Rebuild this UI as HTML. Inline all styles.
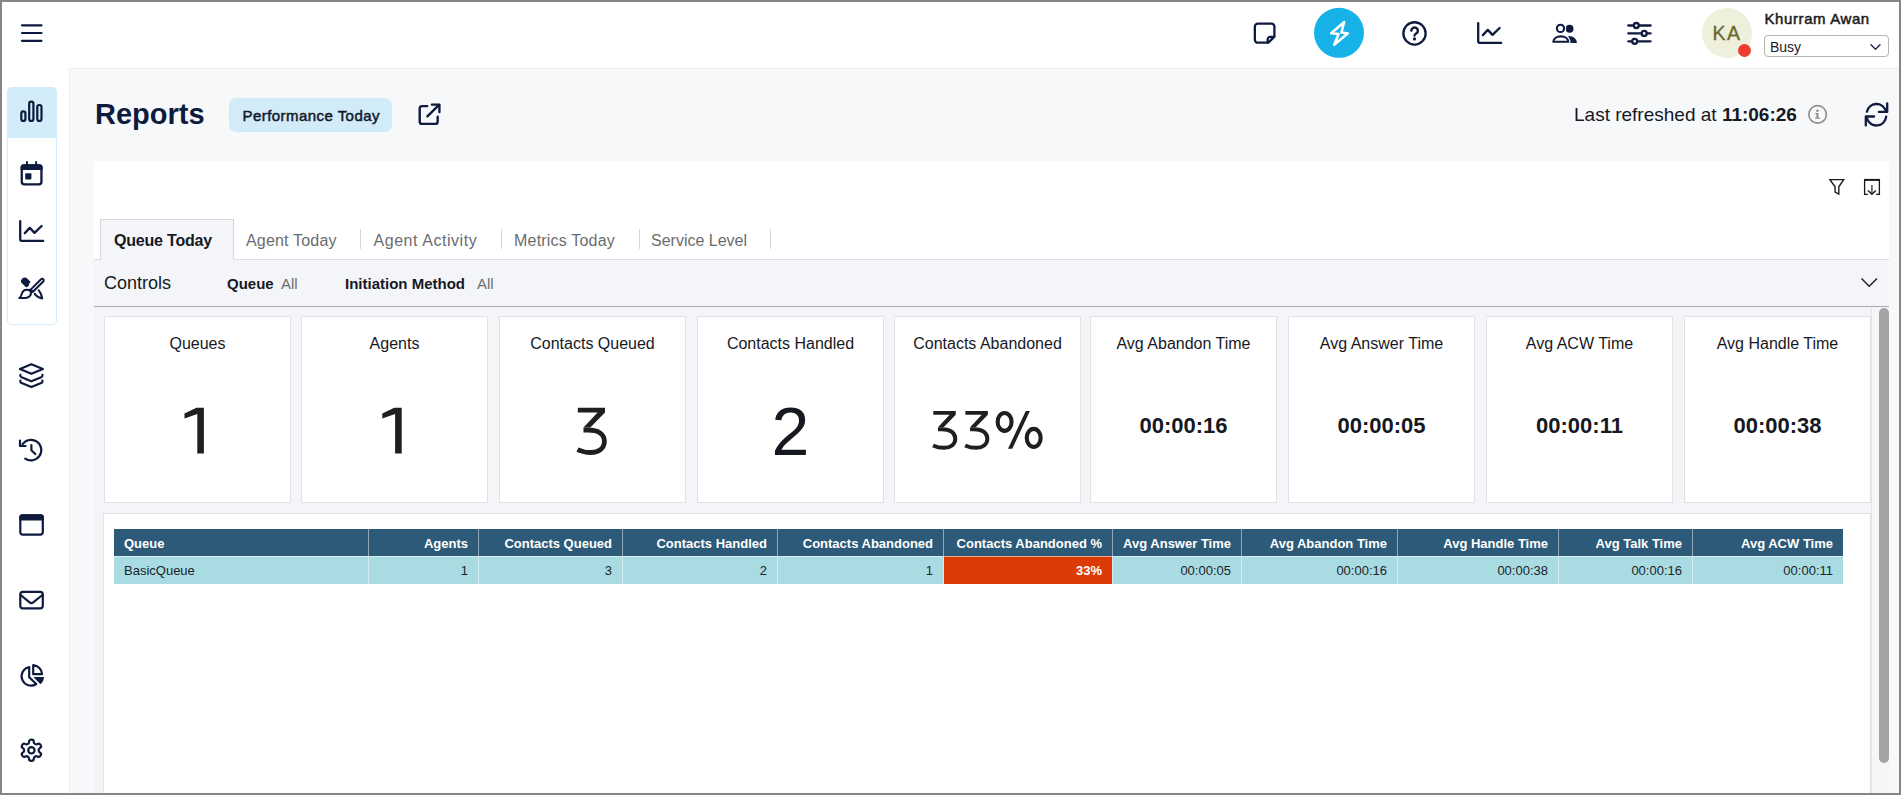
<!DOCTYPE html>
<html><head><meta charset="utf-8">
<style>
*{box-sizing:border-box;margin:0;padding:0}
html,body{width:1901px;height:795px;overflow:hidden}
body{position:relative;background:#f7f8fa;font-family:"Liberation Sans",sans-serif;color:#16191f}
.a{position:absolute}
.frame{position:absolute;left:0;top:0;width:1901px;height:795px;border:2px solid #868686;z-index:50;pointer-events:none}
.hdr{left:0;top:0;width:1901px;height:68px;background:#fff}
.side{left:0;top:68px;width:69px;height:727px;background:#fff}
.t{position:absolute;white-space:nowrap;line-height:1}
.card{position:absolute;top:316px;width:187px;height:187px;background:#fff;border:1px solid #e1e2e3}
.card .ttl{left:0;right:0;text-align:center;font-size:16px;color:#16191f}
.card .big{left:0;right:0;top:80px;text-align:center;font-size:68px;color:#16191f}
.card .pct{left:0;right:0;top:85px;text-align:center;font-size:57px;color:#16191f}
.card .tm{left:0;right:0;top:98px;text-align:center;font-size:22px;font-weight:bold;color:#16191f}
.th,.td{position:absolute;font-size:13px;line-height:1;white-space:nowrap;text-align:right;padding:0 10px}
.th{top:529px;height:27px;padding-top:8px;background:#2c5a78;color:#fff;font-weight:bold;border-left:1px solid #8fa9ba}
.td{top:556px;height:28px;padding-top:7px;border-top:1px solid rgba(255,255,255,0.55);background:#a9dbe3;color:#1e2326;border-left:1px solid #d3edf1}
.th.c0,.td.c0{text-align:left;border-left:none}
.td.or{background:#dd3b06;color:#fff;font-weight:bold}
svg.ov{position:absolute;left:0;top:0;width:1901px;height:795px;z-index:10;overflow:visible}
.nv{stroke:#0f1b3e;fill:none;stroke-width:2;stroke-linecap:round;stroke-linejoin:round}
.nvf{fill:#0f1b3e;stroke:none}
</style></head><body>
<div class="a hdr"></div>
<div class="a side"></div>
<div class="a" style="left:69px;top:68px;width:1832px;height:1px;background:#ececee"></div>
<div class="a" style="left:69px;top:68px;width:1px;height:727px;background:#efeff1"></div>

<!-- sidebar group -->
<div class="a" style="left:7px;top:87px;width:50px;height:238px;border:1px solid #d3ebf6;border-radius:5px;background:#fff"></div>
<div class="a" style="left:7px;top:87px;width:50px;height:51px;background:#d2edf9;border-radius:5px 5px 0 0"></div>

<!-- title row -->
<div class="t" style="left:95px;top:100px;font-size:29px;font-weight:bold;color:#0e1b3d">Reports</div>
<div class="a" style="left:229px;top:98px;width:163px;height:34px;background:#d1ecf8;border-radius:7px"></div>
<div class="t" style="left:242.5px;top:108px;font-size:15px;color:#15192b;letter-spacing:0.45px;-webkit-text-stroke:0.5px #15192b">Performance Today</div>
<div class="t" style="left:1574px;top:105px;font-size:19px;color:#16191f">Last refreshed at <b>11:06:26</b></div>

<!-- header user -->
<div class="a" style="left:1702px;top:8px;width:50px;height:50px;border-radius:50%;background:#eef0dc"></div>
<div class="t" style="left:1712.5px;top:23.5px;font-size:19.5px;color:#6a6a2c;letter-spacing:1.4px;-webkit-text-stroke:0.35px #6a6a2c">KA</div>
<div class="a" style="left:1738px;top:44px;width:13px;height:13px;border-radius:50%;background:#ee3a30"></div>
<div class="t" style="left:1764.5px;top:11px;font-size:15px;color:#1b1b1b;letter-spacing:0.6px;-webkit-text-stroke:0.5px #1b1b1b">Khurram Awan</div>
<div class="a" style="left:1764px;top:35px;width:125px;height:22px;border:1px solid #b4b4b4;border-radius:4px;background:#fff"></div>
<div class="t" style="left:1770px;top:40px;font-size:14px;color:#1b1b1b">Busy</div>

<!-- panel -->
<div class="a" style="left:94px;top:161px;width:1795px;height:634px;background:#fff"></div>
<div class="a" style="left:100px;top:219px;width:134px;height:41px;background:#f4f5f9;border:1px solid #d6d7da;border-bottom:none"></div>
<div class="a" style="left:94px;top:259px;width:1795px;height:48px;background:#f4f5f9;border-top:1px solid #dcdde0;border-bottom:1px solid #a9aaae"></div>
<div class="a" style="left:101px;top:259px;width:132px;height:2px;background:#f4f5f9"></div>
<div class="a" style="left:94px;top:307px;width:1795px;height:488px;background:#f4f5f9"></div>

<div class="t" style="left:114px;top:233px;font-size:16px;font-weight:bold;color:#16191f;letter-spacing:-0.2px">Queue Today</div>
<div class="t" style="left:246px;top:233px;font-size:16px;color:#6b6d70;letter-spacing:0.18px">Agent Today</div>
<div class="t" style="left:373.5px;top:233px;font-size:16px;color:#6b6d70;letter-spacing:0.55px">Agent Activity</div>
<div class="t" style="left:514px;top:233px;font-size:16px;color:#6b6d70;letter-spacing:0.2px">Metrics Today</div>
<div class="t" style="left:651px;top:233px;font-size:16px;color:#6b6d70">Service Level</div>
<div class="a" style="left:360px;top:229px;width:1px;height:20px;background:#d5d6d8"></div>
<div class="a" style="left:501px;top:229px;width:1px;height:20px;background:#d5d6d8"></div>
<div class="a" style="left:639px;top:229px;width:1px;height:20px;background:#d5d6d8"></div>
<div class="a" style="left:770px;top:229px;width:1px;height:20px;background:#d5d6d8"></div>

<div class="t" style="left:104px;top:274px;font-size:18px;color:#16191f">Controls</div>
<div class="t" style="left:227px;top:276px;font-size:15px;font-weight:bold;color:#16191f">Queue</div>
<div class="t" style="left:281px;top:276px;font-size:15px;color:#6b6d70">All</div>
<div class="t" style="left:345px;top:276px;font-size:15px;font-weight:bold;color:#16191f">Initiation Method</div>
<div class="t" style="left:477px;top:276px;font-size:15px;color:#6b6d70">All</div>

<div class="card" style="left:104px"><div class="t ttl" style="top:19px">Queues</div></div>
<div class="card" style="left:301px"><div class="t ttl" style="top:19px">Agents</div></div>
<div class="card" style="left:499px"><div class="t ttl" style="top:19px">Contacts Queued</div></div>
<div class="card" style="left:697px"><div class="t ttl" style="top:19px">Contacts Handled</div><div class="t big">2</div></div>
<div class="card" style="left:894px"><div class="t ttl" style="top:19px">Contacts Abandoned</div></div>
<div class="card" style="left:1090px"><div class="t ttl" style="top:19px">Avg Abandon Time</div><div class="t tm">00:00:16</div></div>
<div class="card" style="left:1288px"><div class="t ttl" style="top:19px">Avg Answer Time</div><div class="t tm">00:00:05</div></div>
<div class="card" style="left:1486px"><div class="t ttl" style="top:19px">Avg ACW Time</div><div class="t tm">00:00:11</div></div>
<div class="card" style="left:1684px"><div class="t ttl" style="top:19px">Avg Handle Time</div><div class="t tm">00:00:38</div></div>


<!-- table panel -->
<div class="a" style="left:103px;top:513px;width:1768px;height:290px;background:#fff;border:1px solid #e1e2e3"></div>
<div class="th c0" style="left:114px;width:254px">Queue</div><div class="td c0" style="left:114px;width:254px">BasicQueue</div>
<div class="th " style="left:368px;width:110px">Agents</div><div class="td " style="left:368px;width:110px">1</div>
<div class="th " style="left:478px;width:144px">Contacts Queued</div><div class="td " style="left:478px;width:144px">3</div>
<div class="th " style="left:622px;width:155px">Contacts Handled</div><div class="td " style="left:622px;width:155px">2</div>
<div class="th " style="left:777px;width:166px">Contacts Abandoned</div><div class="td " style="left:777px;width:166px">1</div>
<div class="th " style="left:943px;width:169px">Contacts Abandoned %</div><div class="td  or" style="left:943px;width:169px">33%</div>
<div class="th " style="left:1112px;width:129px">Avg Answer Time</div><div class="td " style="left:1112px;width:129px">00:00:05</div>
<div class="th " style="left:1241px;width:156px">Avg Abandon Time</div><div class="td " style="left:1241px;width:156px">00:00:16</div>
<div class="th " style="left:1397px;width:161px">Avg Handle Time</div><div class="td " style="left:1397px;width:161px">00:00:38</div>
<div class="th " style="left:1558px;width:134px">Avg Talk Time</div><div class="td " style="left:1558px;width:134px">00:00:16</div>
<div class="th " style="left:1692px;width:151px">Avg ACW Time</div><div class="td " style="left:1692px;width:151px">00:00:11</div>


<!-- scrollbar -->
<div class="a" style="left:1871px;top:307px;width:18px;height:488px;background:#f6f6f8;border-left:1px solid #e6e6ea"></div>
<div class="a" style="left:1879px;top:308px;width:10px;height:455px;background:#a4a4a6;border-radius:5px"></div>

<svg class="ov" viewBox="0 0 1901 795">
<!-- hamburger -->
<g class="nv" style="stroke-width:2.2">
<line x1="22" y1="25.3" x2="41.5" y2="25.3"/><line x1="22" y1="33" x2="41.5" y2="33"/><line x1="22" y1="40.8" x2="41.5" y2="40.8"/>
</g>
<!-- sidebar: bars -->
<g class="nv" style="stroke-width:2.2">
<rect x="21.3" y="111.3" width="4.1" height="9.6" rx="2"/>
<rect x="29.2" y="101.7" width="4.2" height="19.2" rx="2"/>
<rect x="37.3" y="105" width="4.2" height="15.9" rx="2"/>
</g>
<!-- calendar -->
<g>
<rect class="nv" x="21.75" y="165.45" width="19.7" height="19" rx="2.6" style="stroke-width:2.3"/>
<path class="nvf" d="M20.6,169.9 V167.3 a3,3 0 0 1 3,-3 H39.6 a3,3 0 0 1 3,3 V169.9 Z"/>
<rect class="nvf" x="26" y="161.2" width="1.9" height="4"/>
<rect class="nvf" x="35.2" y="161.2" width="1.9" height="4"/>
<rect class="nvf" x="25.2" y="173.2" width="6.2" height="6.4" rx="1"/>
</g>
<!-- line chart -->
<g class="nv" style="stroke-width:2.3">
<path d="M20.2,221.2 V238.9 a2,2 0 0 0 2,2 H43.2"/>
<polyline points="24.8,233.1 29.8,227.9 34.5,232.85 41.6,226"/>
</g>
<!-- brush -->
<g>
<path class="nvf" d="M21.2,282.6 c-0.8,-2.4 1,-4.8 3.4,-5 c1,-0.1 1.9,0.3 2.6,1 l3.5,3.5 l-1.7,1.7 l0.3,1.2 l-2.3,2.3 l-1.2,-0.4 z"/>
<path class="nv" style="stroke-width:2" d="M41.3,279 a1.6,1.6 0 0 1 2.2,2.2 l-10.6,10.6 l-2.2,-2.2 z"/>
<path class="nvf" d="M29.4,288.6 l3.6,3.6 l-1.6,1.6 l-3.6,-3.6 z"/>
<path class="nv" style="stroke-width:2" d="M28.5,290 c-2.8,-0.6 -5.6,0.8 -6.6,3.4 c-0.6,1.8 -0.8,3.8 -2.6,4.6 h6 c3.4,0 6.2,-2.6 5.6,-5.6"/>
<path class="nv" style="stroke-width:2" d="M34.6,293.8 c1.8,2.4 4.4,4 7.6,4.6 c-0.4,-3 -1.6,-5.8 -3.6,-8.2"/>
</g>
<!-- layers -->
<g class="nv" style="stroke-width:2.2">
<path d="M31.4,364.2 L42.9,368.9 L31.4,373.8 L19.9,368.9 Z"/>
<path d="M20.4,374.8 q-0.6,1.4 0.6,2.1 L31.4,381.3 L41.8,376.9 q1.2,-0.7 0.6,-2.1"/>
<path d="M20.4,380.6 q-0.6,1.4 0.6,2.1 L31.4,387.1 L41.8,382.7 q1.2,-0.7 0.6,-2.1"/>
</g>
<!-- history -->
<g class="nv" style="stroke-width:2.2">
<path d="M22.6,444.2 A10.3,10.3 0 1 1 25.2,458.6"/>
<polyline points="20,440.5 20,446 25.6,446"/>
<polyline points="31.4,445 31.4,450.3 35.3,454"/>
</g>
<!-- window -->
<g>
<rect class="nv" x="20.3" y="515.3" width="22.5" height="19.4" rx="2.6" style="stroke-width:2.2"/>
<path class="nvf" d="M19.2,520.5 V517.2 a3,3 0 0 1 3,-3 H40.9 a3,3 0 0 1 3,3 V520.5 Z"/>
</g>
<!-- mail -->
<g class="nv" style="stroke-width:2.2">
<rect x="20.3" y="591.9" width="22.5" height="16.5" rx="2.6"/>
<path d="M20.6,595 L29.6,602.4 a3,3 0 0 0 3.6,0 L42.4,595"/>
</g>
<!-- pie -->
<g>
<path class="nv" style="stroke-width:2.2" d="M29.2,667 A9.4,9.4 0 1 0 36.3,684 L29.2,677.3 Z"/>
<path class="nv" style="stroke-width:2.2" d="M33.2,665.1 A9.4,9.4 0 0 1 42.1,674.2 L33.2,674.2 Z"/>
<path class="nvf" d="M33.4,677.1 H44 A10,10 0 0 1 40.4,684.3 Z"/>
</g>
<!-- gear (lucide) -->
<g class="nv" transform="translate(18.68,737.58) scale(1.06)" style="stroke-width:2.08">
<path d="M12.22 2h-.44a2 2 0 0 0-2 2v.18a2 2 0 0 1-1 1.73l-.43.25a2 2 0 0 1-2 0l-.15-.08a2 2 0 0 0-2.730.73l-.22.38a2 2 0 0 0 .73 2.73l.15.1a2 2 0 0 1 1 1.72v.51a2 2 0 0 1-1 1.740l-.15.09a2 2 0 0 0-.73 2.73l.22.38a2 2 0 0 0 2.73.73l.15-.08a2 2 0 0 1 2 0l.43.25a2 2 0 0 1 1 1.73V20a2 2 0 0 0 2 2h.44a2 2 0 0 0 2-2v-.18a2 2 0 0 1 1-1.73l.43-.25a2 2 0 0 1 2 0l.15.08a2 2 0 0 0 2.73-.73l.22-.39a2 2 0 0 0-.73-2.73l-.15-.08a2 2 0 0 1-1-1.74v-.5a2 2 0 0 1 1-1.74l.15-.09a2 2 0 0 0 .73-2.73l-.22-.38a2 2 0 0 0-2.73-.73l-.15.08a2 2 0 0 1-2 0l-.43-.25a2 2 0 0 1-1-1.73V4a2 2 0 0 0-2-2z"/>
<circle cx="12" cy="12" r="3"/>
</g>

<!-- header icons -->
<!-- note -->
<g class="nv" style="stroke-width:2.3">
<path d="M1257.85,23.6 H1271.4 A3,3 0 0 1 1274.4,26.6 V36.6 L1268.3,42.7 H1257.85 A3,3 0 0 1 1254.85,39.7 V26.6 A3,3 0 0 1 1257.85,23.6 Z"/>
<path d="M1274.2,36.8 H1270.3 A2.6,2.6 0 0 0 1267.7,39.4 V42.6"/>
</g>
<!-- bolt circle -->
<circle cx="1339" cy="32.8" r="25" fill="#17b2e7"/>
<path d="M1344.2,22 L1331.2,33.2 L1338.6,34.1 L1334.2,44.8 L1347.9,33.4 L1341.4,32.5 Z" fill="none" stroke="#fff" stroke-width="2.5" stroke-linejoin="round"/>
<!-- help -->
<circle class="nv" cx="1414.5" cy="33.4" r="11.15" style="stroke-width:2.3"/>
<path class="nv" style="stroke-width:2.4" d="M1411.3,30.6 a3.3,3.1 0 1 1 5.2,2.6 c-1.2,0.8 -2,1.3 -2,2.4"/>
<circle class="nvf" cx="1414.5" cy="38.9" r="1.6"/>
<!-- chart -->
<g class="nv" style="stroke-width:2.3">
<path d="M1478.2,23.2 V40.9 a2,2 0 0 0 2,2 H1501.2"/>
<polyline points="1482.8,35.1 1487.8,29.9 1492.5,34.85 1499.6,28"/>
</g>
<!-- people -->
<g>
<circle class="nvf" cx="1569.6" cy="28.75" r="3.9"/>
<path class="nvf" d="M1568.4,36.1 C1573.5,36.1 1576.6,38.9 1576.9,42.9 H1568.4 Z"/>
<circle cx="1560.5" cy="28.4" r="5.7" fill="#fff"/>
<path d="M1553.3,41.8 C1553.6,38.5 1556.8,36.4 1560.8,36.4 C1564.8,36.4 1568.1,38.5 1568.4,41.8 Z" fill="#fff" stroke="#fff" stroke-width="4.5" stroke-linejoin="round"/>
<circle class="nv" cx="1560.5" cy="28.4" r="3.6" style="stroke-width:2.1"/>
<path class="nv" style="stroke-width:2.1" d="M1553.3,41.8 C1553.6,38.5 1556.8,36.4 1560.8,36.4 C1564.8,36.4 1568.1,38.5 1568.4,41.8 Z"/>
</g>
<!-- sliders -->
<g class="nv" style="stroke-width:2.3">
<line x1="1628.3" y1="25.5" x2="1650.6" y2="25.5"/>
<line x1="1628.3" y1="33.4" x2="1650.6" y2="33.4"/>
<line x1="1628.3" y1="41.3" x2="1650.6" y2="41.3"/>
<circle cx="1636.3" cy="25.5" r="2.5" fill="#fff"/>
<circle cx="1644.2" cy="33.4" r="2.5" fill="#fff"/>
<circle cx="1634.7" cy="41.3" r="2.5" fill="#fff"/>
</g>
<!-- select chevron -->
<polyline points="1871,44.8 1875.5,49.3 1880,44.8" fill="none" stroke="#1b2a4a" stroke-width="1.4" stroke-linecap="round"/>
<!-- external link -->
<g class="nv" style="stroke-width:2.4">
<path d="M427.2,106.1 H422.2 a2.5,2.5 0 0 0 -2.5,2.5 V121.4 a2.5,2.5 0 0 0 2.5,2.5 H435.2 a2.5,2.5 0 0 0 2.5,-2.5 V116.7"/>
<polyline points="431.9,104.6 439.4,104.6 439.4,112.1"/>
<line x1="439" y1="104.9" x2="427.4" y2="116.3"/>
</g>
<!-- info -->
<circle cx="1817.6" cy="114.4" r="8.75" fill="none" stroke="#8c8c8c" stroke-width="1.6"/>
<circle cx="1817.4" cy="110.7" r="1.25" fill="#8c8c8c"/>
<path d="M1815.3,113 H1818.4 V117.5 H1819.9 V118.8 H1815.1 V117.5 H1816.4 V114.3 H1815.3 Z" fill="#8c8c8c"/>
<!-- refresh -->
<g class="nv" style="stroke-width:2.3">
<path d="M1866.9,111.7 A9.8,9.8 0 0 1 1885.7,110.5"/>
<polyline points="1887.2,103.4 1887.2,111.9 1878.9,111.9"/>
<path d="M1886.2,116.7 A9.8,9.8 0 0 1 1867,118.3"/>
<polyline points="1865.8,125.4 1865.8,116.5 1874.1,116.5"/>
</g>
<!-- filter -->
<path d="M1829.9,179.6 H1843.7 L1838.8,186.8 V194 L1835.1,192 V186.8 Z" fill="none" stroke="#1a1a1a" stroke-width="1.4" stroke-linejoin="miter"/>
<!-- download -->
<rect x="1864" y="178.9" width="16" height="2" fill="#1a1a1a"/>
<path d="M1864.6,180 V194.4 H1867.9 M1879.4,180 V194.4 H1876.1" fill="none" stroke="#1a1a1a" stroke-width="1.3"/>
<line x1="1871.9" y1="185" x2="1871.9" y2="193.8" stroke="#333" stroke-width="1.3"/>
<polyline points="1868,190.5 1871.9,194.2 1875.8,190.5" fill="none" stroke="#1a1a1a" stroke-width="1.4"/>
<!-- big ones -->
<path fill="#1f1f1f" d="M196.4,407.8 H203.9 V453.5 H197.3 V413.9 L184.5,418.6 V413.5 Z"/>
<path fill="#1f1f1f" d="M394.2,407.8 H401.7 V453.5 H395.1 V413.9 L382.3,418.6 V413.5 Z"/>
<g id="three3"><g><path fill="#1f1f1f" d="M577.8,407.8 H605 V412.6 L590.3,427.6 H583.5 L597.6,412.6 H577.8 Z"/><path fill="none" stroke="#1f1f1f" stroke-width="4.8" d="M583.5,430 H588 C599,430 604.4,434.5 604.4,441.5 C604.4,448.5 598.5,452.5 591,452.5 C586.5,452.5 581.5,451.5 577.5,449.6"/></g></g>
<g transform="translate(933.3,410.9) scale(0.826) translate(-577.8,-407.8)"><g><path fill="#1f1f1f" d="M577.8,407.8 H605 V412.6 L590.3,427.6 H583.5 L597.6,412.6 H577.8 Z"/><path fill="none" stroke="#1f1f1f" stroke-width="4.8" d="M583.5,430 H588 C599,430 604.4,434.5 604.4,441.5 C604.4,448.5 598.5,452.5 591,452.5 C586.5,452.5 581.5,451.5 577.5,449.6"/></g></g>
<g transform="translate(965.4,410.9) scale(0.826) translate(-577.8,-407.8)"><g><path fill="#1f1f1f" d="M577.8,407.8 H605 V412.6 L590.3,427.6 H583.5 L597.6,412.6 H577.8 Z"/><path fill="none" stroke="#1f1f1f" stroke-width="4.8" d="M583.5,430 H588 C599,430 604.4,434.5 604.4,441.5 C604.4,448.5 598.5,452.5 591,452.5 C586.5,452.5 581.5,451.5 577.5,449.6"/></g></g>
<g fill="none" stroke="#1f1f1f" stroke-width="3.9">
<ellipse cx="1004.6" cy="421.9" rx="6.95" ry="8.95" stroke-width="4.1"/>
<ellipse cx="1033.7" cy="437.9" rx="6.95" ry="9" stroke-width="4.1"/>
</g>
<path fill="#1f1f1f" d="M1025.8,410.9 H1029.9 L1012.3,448.7 H1008 Z"/>
<!-- controls chevron -->
<polyline points="1861.5,278.5 1869.2,286.3 1877,278.5" fill="none" stroke="#222" stroke-width="1.5"/>
</svg>

<div class="frame"></div>
</body></html>
